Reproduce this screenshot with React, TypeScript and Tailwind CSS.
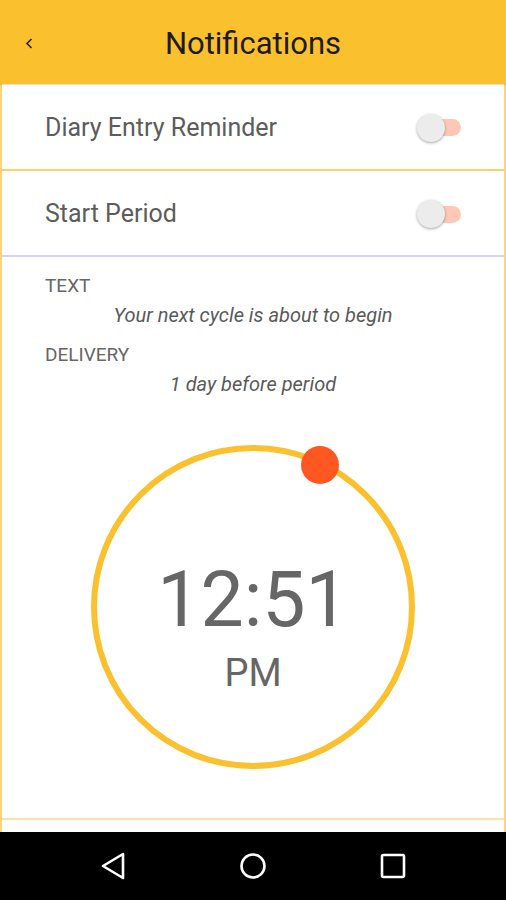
import React from "react";

const Toggle = () => (
  <div className="relative w-[46px] h-[30px] flex items-center">
    <div className="absolute left-[10px] right-0 h-[17px] rounded-full bg-[#ffc7b5]" />
    <div className="absolute left-[2px] w-[28px] h-[28px] rounded-full bg-[#ececec] shadow-[0_1px_3px_rgba(0,0,0,0.35)]" />
  </div>
);

const App = () => {
  return (
    <div
      className="w-[506px] h-[900px] bg-white flex flex-col overflow-hidden"
      style={{ fontFamily: "Roboto, 'Liberation Sans', sans-serif" }}
    >
      {/* header */}
      <div className="h-[84px] bg-[#fbc02d] flex items-center relative shrink-0 shadow-[0_1px_1px_rgba(0,0,0,0.12)]">
        <svg className="absolute left-[25px] top-[38px]" width="8" height="11" viewBox="0 0 8 11" fill="none" stroke="#222" strokeWidth="1.6">
          <path d="M6.5 1 L2 5.5 L6.5 10" />
        </svg>
        <h1 className="w-full text-center text-[31px] text-[#1c1c1c] pt-[4px]">Notifications</h1>
      </div>

      <div className="flex-1 flex flex-col border-x-2 border-[#fdd47a]">
        <div className="h-[87px] flex items-center justify-between pl-[43px] pr-[43px] pt-[2px] border-b-2 border-[#fbd266]">
          <span className="text-[25px] text-[#5c5c5c]">Diary Entry Reminder</span>
          <Toggle />
        </div>
        <div className="h-[86px] flex items-center justify-between pl-[43px] pr-[43px] pt-[2px] border-b-2 border-[#d6d4f2]">
          <span className="text-[25px] text-[#5c5c5c]">Start Period</span>
          <Toggle />
        </div>

        <div className="pl-[43px] pt-[18px] text-[19px] text-[#666] leading-[22px]">TEXT</div>
        <div className="text-center italic text-[20px] text-[#5a5a5a] mt-[7px] leading-[22px]">
          Your next cycle is about to begin
        </div>
        <div className="pl-[43px] mt-[18px] text-[19px] text-[#666] leading-[22px]">DELIVERY</div>
        <div className="text-center italic text-[20px] text-[#5a5a5a] mt-[7px] leading-[22px]">
          1 day before period
        </div>

        <div className="flex justify-center mt-[50px]">
          <div className="relative w-[324px] h-[324px]">
            <div className="absolute inset-0 rounded-full border-[6px] border-[#fbc02d]" />
            <div className="absolute left-[210px] top-[1px] w-[38px] h-[38px] rounded-full bg-[#ff5722]" />
            <div className="absolute inset-0 flex flex-col items-center pt-[117px]">
              <span className="text-[77px] leading-[77px] text-[#666]">12:51</span>
              <span className="text-[38px] leading-[38px] text-[#666] mt-[15px]">PM</span>
            </div>
          </div>
        </div>

        <div className="mt-auto h-[14px] border-t-2 border-[#fde2a6]" />
      </div>

      {/* android nav bar */}
      <div className="h-[68px] bg-black flex items-center justify-center shrink-0">
        <div className="w-[140px] flex justify-center">
          <svg width="26" height="28" viewBox="0 0 26 28" fill="none" stroke="white" strokeWidth="2.6" strokeLinejoin="round">
            <path d="M23 2 L3 14 L23 26 Z" />
          </svg>
        </div>
        <div className="w-[140px] flex justify-center">
          <svg width="28" height="28" viewBox="0 0 28 28" fill="none" stroke="white" strokeWidth="2.6">
            <circle cx="14" cy="14" r="11.5" />
          </svg>
        </div>
        <div className="w-[140px] flex justify-center">
          <svg width="26" height="26" viewBox="0 0 26 26" fill="none" stroke="white" strokeWidth="2.6">
            <rect x="2" y="2" width="22" height="22" rx="1.5" />
          </svg>
        </div>
      </div>
    </div>
  );
};

export default App;
